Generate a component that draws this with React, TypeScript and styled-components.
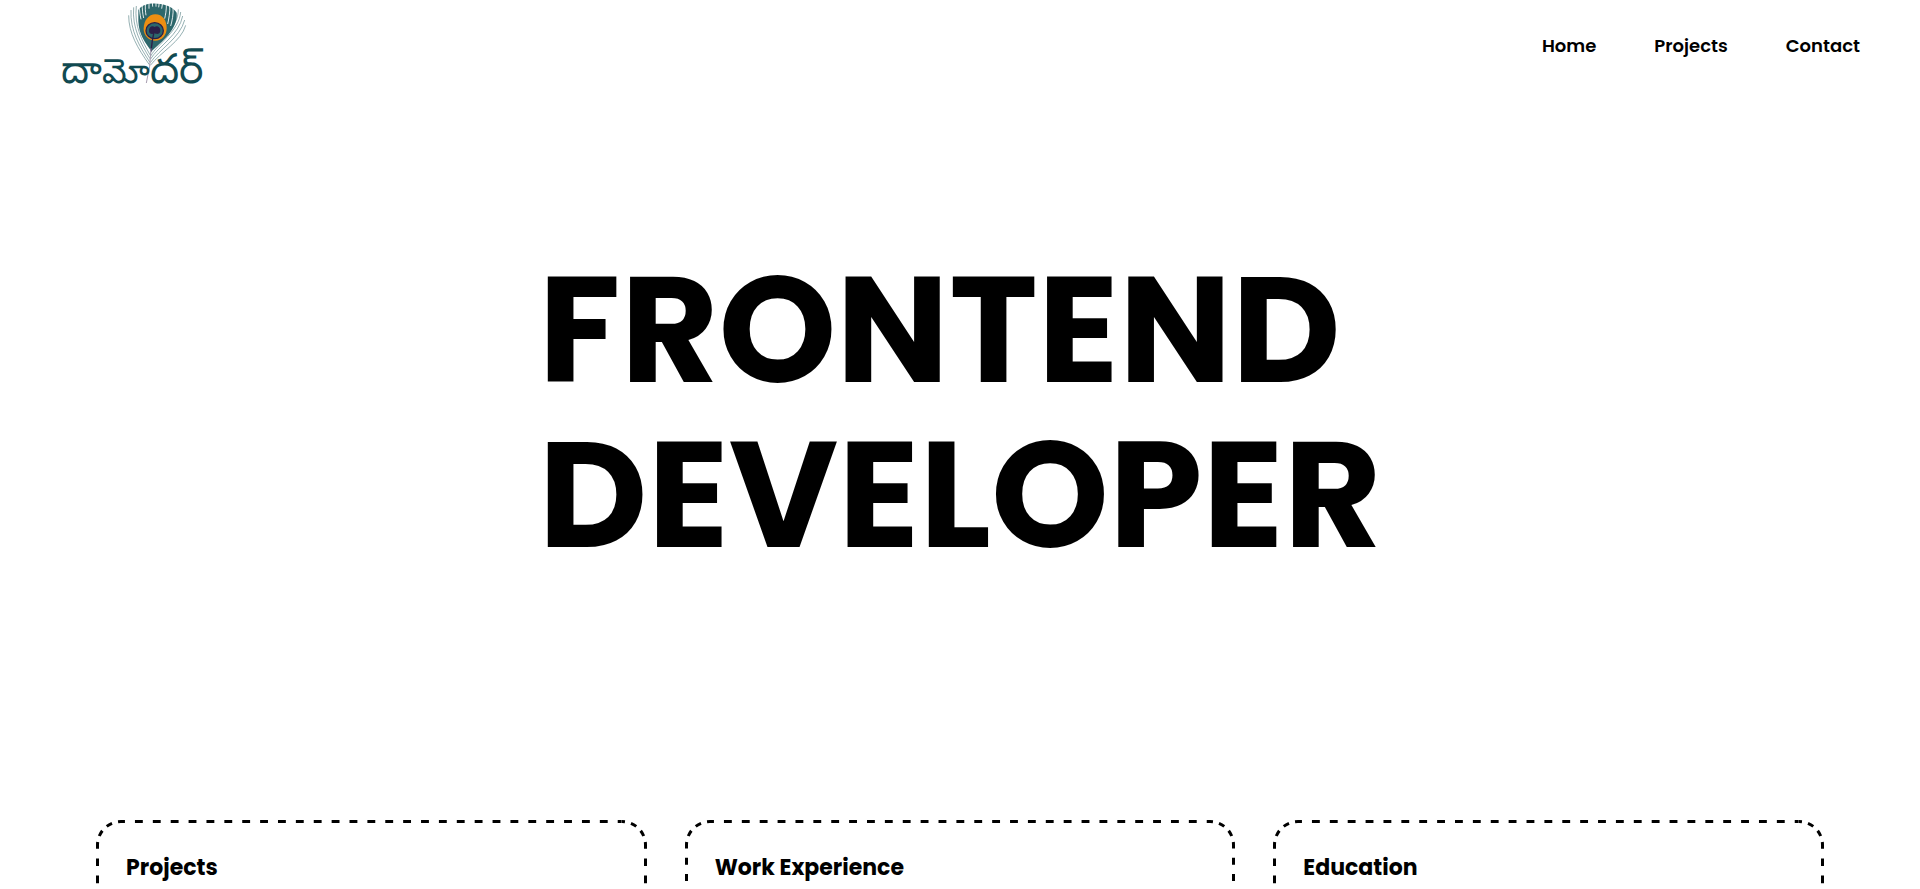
import React from 'react';
import styled, { createGlobalStyle } from 'styled-components';

const GlobalStyle = createGlobalStyle`
  *, *::before, *::after { box-sizing: border-box; }
  body {
    margin: 0;
    background: #fff;
    color: #000;
    font-family: Poppins, 'Open Sans', sans-serif;
  }
`;

const Page = styled.div`
  height: 100vh;
  overflow: hidden;
`;

const Header = styled.header`
  display: flex;
  align-items: center;
  justify-content: space-between;
  height: 92px;
  padding: 0 60px 0 50px;
`;

const LogoLink = styled.a`
  display: block;
  align-self: flex-start;
`;

const LogoMark = styled.svg`
  display: block;
  width: 170px;
  height: 100px;
`;

const Syllable = styled.text<{ $size: number }>`
  fill: #114a51;
  font-family: Poppins, sans-serif;
  font-size: ${(p) => p.$size}px;
  font-weight: 400;
`;

const Nav = styled.nav`
  display: flex;
  gap: 58px;
`;

const NavLink = styled.a`
  color: #000;
  font-size: 18px;
  font-weight: 600;
  line-height: 28px;
  text-decoration: none;
`;

const Hero = styled.section`
  display: flex;
  justify-content: center;
  padding: 155px 20px;
`;

const Title = styled.h1`
  width: min-content;
  margin: 0;
  font-size: 150px;
  font-weight: 700;
  line-height: 165px;
`;

const Cards = styled.section`
  display: grid;
  grid-template-columns: repeat(3, 1fr);
  align-items: start;
  gap: 38px;
  padding: 88px 5% 0;
`;

const Card = styled.article<{ $height: number }>`
  position: relative;
  min-height: ${(p) => p.$height}px;
  padding: 30px;
`;

const CardTitle = styled.h2`
  margin: 0;
  font-size: 22px;
  font-weight: 700;
  line-height: 36px;
`;

const Frame = styled.div`
  position: absolute;
  inset: 0;
  display: grid;
  grid-template: 25px 1fr 25px / 25px 1fr 25px;
  pointer-events: none;
`;

const FramePiece = styled.svg<{ $flip?: 'x' | 'y' | 'both' }>`
  display: block;
  width: 100%;
  height: 100%;
  fill: none;
  stroke: #000;
  stroke-width: 3px;
  transform: ${(p) =>
    `scale(${p.$flip === 'x' || p.$flip === 'both' ? -1 : 1}, ${p.$flip === 'y' || p.$flip === 'both' ? -1 : 1})`};
`;

const horizontal = (
  <line x1="0" y1="1.5" x2="100%" y2="1.5" pathLength={2800} strokeDasharray="44 56" strokeDashoffset={22} />
);
const vertical = (
  <line x1="1.5" y1="0" x2="1.5" y2="100%" pathLength={1500} strokeDasharray="44 56" strokeDashoffset={22} />
);
const corner = (
  <path d="M1.5 25A23.5 23.5 0 0 1 25 1.5" pathLength={300} strokeDasharray="50 50" strokeDashoffset={25} />
);

/* Dashed rounded outline: every side starts and ends in the middle of a dash. */
function DashedFrame() {
  return (
    <Frame aria-hidden="true">
      <FramePiece>{corner}</FramePiece>
      <FramePiece>{horizontal}</FramePiece>
      <FramePiece $flip="x">{corner}</FramePiece>
      <FramePiece>{vertical}</FramePiece>
      <span />
      <FramePiece $flip="x">{vertical}</FramePiece>
      <FramePiece $flip="y">{corner}</FramePiece>
      <FramePiece $flip="y">{horizontal}</FramePiece>
      <FramePiece $flip="both">{corner}</FramePiece>
    </Frame>
  );
}

const barbs = [
  'M236 46C236 100 264 146 298 194',
  'M243 30C240 92 268 138 299 186',
  'M251 22C246 84 272 130 300 176',
  'M259 18C252 78 276 122 301 166',
  'M407 76C394 124 332 156 301 196',
  'M404 60C390 114 328 148 301 188',
  'M398 48C388 104 324 140 301 178',
  'M392 36C388 92 322 132 302 168',
  'M385 28C386 84 322 124 302 158',
];

const slits = [
  'M268 12C268 30 270 44 273 58',
  'M277 10C276 26 278 42 281 54',
  'M287 8C285 22 286 34 288 46',
  'M297 8L297 26',
  'M307 6L308 20',
  'M318 6L318 20',
  'M328 6L326 22',
  'M338 8L335 26',
  'M349 10C350 30 346 46 344 56',
  'M359 14C361 36 356 58 353 72',
  'M369 20C371 42 366 64 362 78',
];

const syllables = [
  { text: 'దా', x: 34, size: 118 },
  { text: 'మో', x: 157, size: 104 },
  { text: 'దర్', x: 299, size: 124 },
];

function Logo() {
  return (
    <LogoMark viewBox="0 0 510 300" role="img" aria-label="దామోదర్">
      <g fill="none" stroke="#6d9396" strokeWidth="2.2">
        {barbs.map((d) => (
          <path key={d} d={d} />
        ))}
      </g>
      <path
        d="M265 30C276 12 302 9 322 11C345 11 370 22 380 38C384 78 352 114 304 153C286 130 266 102 265 64Z"
        fill="#2d676b"
      />
      <g fill="none" stroke="#fff" strokeWidth="2.6">
        {slits.map((d) => (
          <path key={d} d={d} />
        ))}
      </g>
      <path
        d="M316 43C338 43 350 62 350 84C350 107 335 122 316 122C296 122 281 106 281 86C281 62 296 43 316 43Z"
        fill="#ec8f12"
      />
      <ellipse cx="314" cy="92" rx="26" ry="24" fill="#2d676b" stroke="#2b1f48" strokeWidth="4" />
      <path
        d="M297 94C296 80 307 76 314 81C321 76 332 81 331 93C330 104 318 103 314 99C308 104 298 103 297 94Z"
        fill="#2b1f48"
      />
      <path d="M312 96Q306 122 303 154" fill="none" stroke="#2b1f48" strokeWidth="4" />
      <path d="M303 145Q302 200 289 249" fill="none" stroke="#a79db0" strokeWidth="3" />
      {syllables.map((s) => (
        <Syllable key={s.text} x={s.x} y="249" $size={s.size}>
          {s.text}
        </Syllable>
      ))}
    </LogoMark>
  );
}

const links = ['Home', 'Projects', 'Contact'];

const cards = [
  { title: 'Projects', height: 308 },
  { title: 'Work Experience', height: 294 },
  { title: 'Education', height: 308 },
];

export default function App() {
  return (
    <>
      <GlobalStyle />
      <Page>
        <Header>
          <LogoLink href="#home">
            <Logo />
          </LogoLink>
          <Nav>
            {links.map((label) => (
              <NavLink key={label} href={`#${label.toLowerCase()}`}>
                {label}
              </NavLink>
            ))}
          </Nav>
        </Header>
        <main>
          <Hero>
            <Title>FRONTEND DEVELOPER</Title>
          </Hero>
          <Cards>
            {cards.map((card) => (
              <Card key={card.title} $height={card.height}>
                <DashedFrame />
                <CardTitle>{card.title}</CardTitle>
              </Card>
            ))}
          </Cards>
        </main>
      </Page>
    </>
  );
}
